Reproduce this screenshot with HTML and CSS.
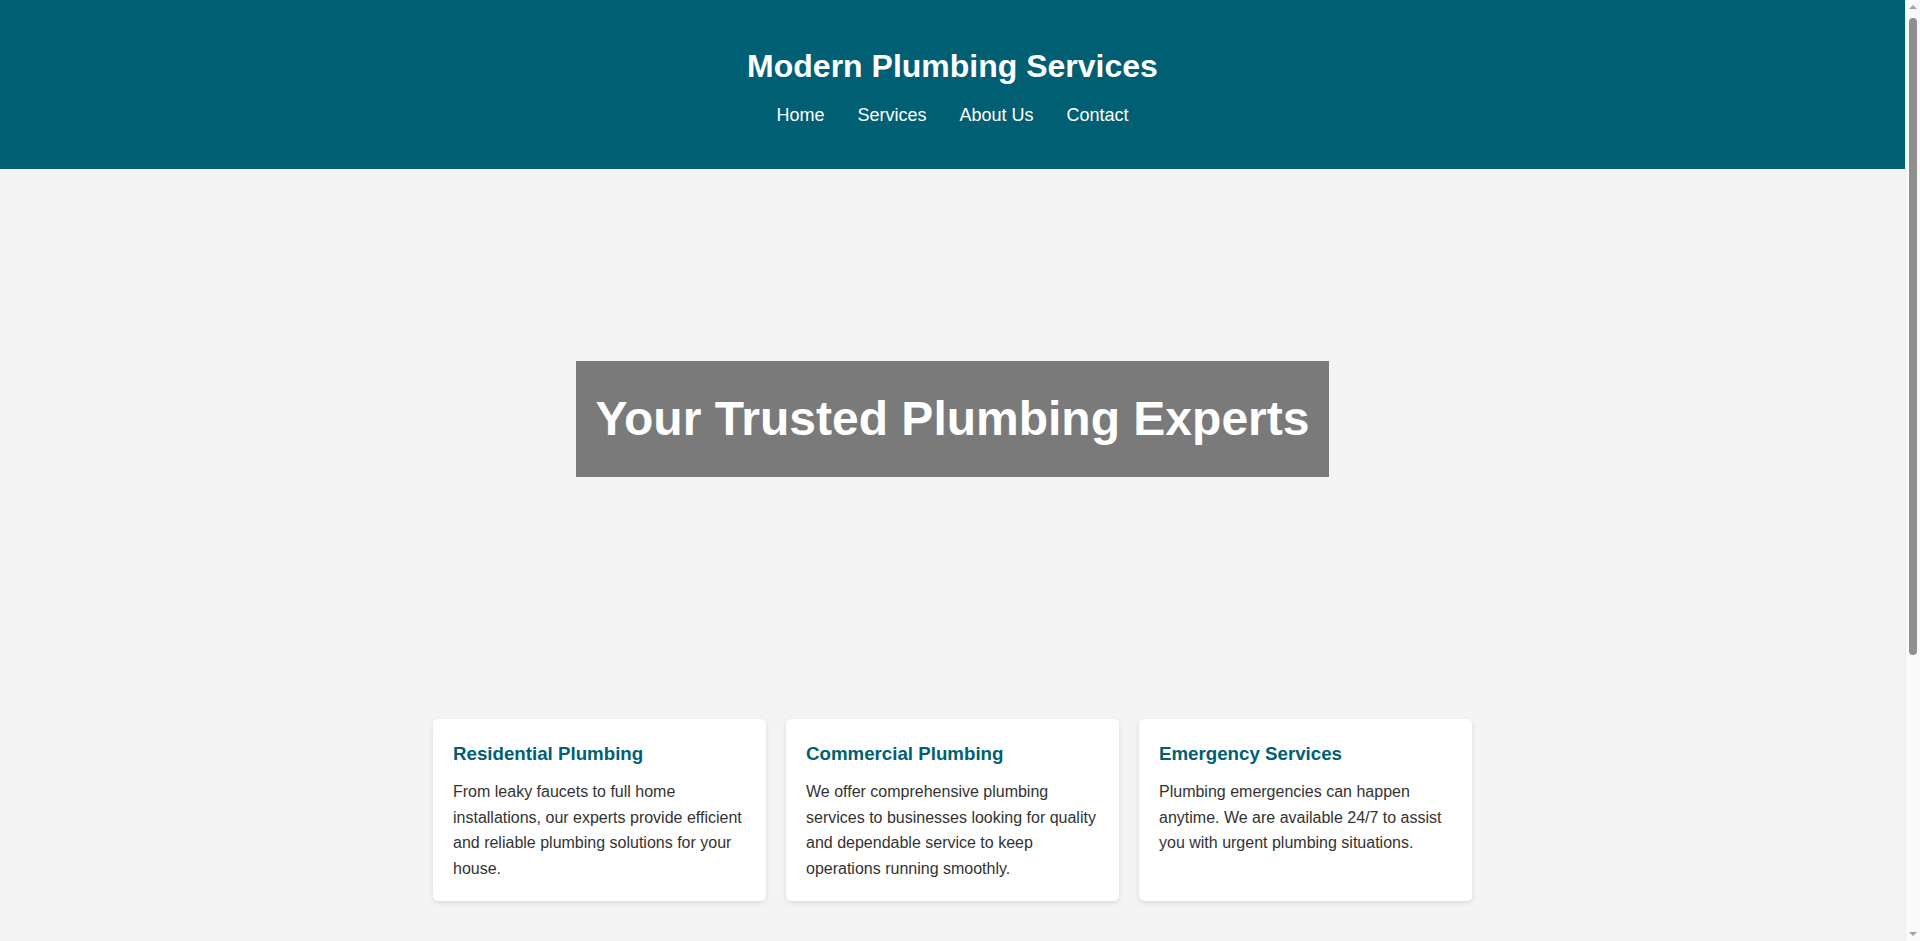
FILE: index.html
```html
<!DOCTYPE html>
<html lang="en">
<head>
<meta charset="UTF-8">
<title>Modern Plumbing Services</title>
<link rel="stylesheet" href="styles.css">
</head>
<body>
<div class="page">
  <header class="site-header">
    <h1 class="site-title">Modern Plumbing Services</h1>
    <nav class="main-nav">
      <ul class="nav-list">
        <li><a href="#home">Home</a></li>
        <li><a href="#services">Services</a></li>
        <li><a href="#about">About Us</a></li>
        <li><a href="#contact">Contact</a></li>
      </ul>
    </nav>
  </header>

  <section class="hero" id="home">
    <h2 class="hero-title">Your Trusted Plumbing Experts</h2>
  </section>

  <section class="services" id="services">
    <div class="service-grid">
      <div class="service-card">
        <h3>Residential Plumbing</h3>
        <p>From leaky faucets to full home installations, our experts provide efficient and reliable plumbing solutions for your house.</p>
      </div>
      <div class="service-card">
        <h3>Commercial Plumbing</h3>
        <p>We offer comprehensive plumbing services to businesses looking for quality and dependable service to keep operations running smoothly.</p>
      </div>
      <div class="service-card">
        <h3>Emergency Services</h3>
        <p>Plumbing emergencies can happen anytime. We are available 24/7 to assist you with urgent plumbing situations.</p>
      </div>
    </div>
  </section>

  <section class="about" id="about">
    <h2 class="section-title">About Us</h2>
    <p>Modern Plumbing Services has been serving the community with honest, high-quality plumbing work for years. Our licensed technicians take pride in doing every job right the first time.</p>
    <p>We believe in transparent pricing, punctual service and lasting results.</p>
  </section>

  <footer class="site-footer" id="contact">
    <p>&copy; 2024 Modern Plumbing Services. All rights reserved.</p>
  </footer>
</div>

<div class="scrollbar" aria-hidden="true">
  <span class="scroll-arrow up"></span>
  <span class="scroll-thumb"></span>
  <span class="scroll-arrow down"></span>
</div>
</body>
</html>
```

FILE: styles.css
```css
* {
  box-sizing: border-box;
}

html,
body {
  overflow-x: hidden;
}

body {
  margin: 0;
  font-family: "Liberation Sans", Arial, sans-serif;
  line-height: 1.6;
  background: #f4f4f4;
  color: #333;
}

.page {
  margin-right: 15px;
}

.site-header {
  background: #005f73;
  color: #fff;
  text-align: center;
  padding: 20px 0 20px;
}

.site-title {
  font-size: 32px;
  margin: 21px 0 9px;
}

.nav-list {
  list-style: none;
  margin: 0 0 19px;
  padding: 0;
  display: flex;
  justify-content: center;
  gap: 33px;
  font-size: 18px;
  line-height: 28.8px;
}

.nav-list a {
  color: #fff;
  text-decoration: none;
}

.hero {
  height: 500px;
  display: flex;
  align-items: center;
  justify-content: center;
}

.hero-title {
  margin: 0;
  font-size: 48px;
  color: #fff;
  background: rgba(0, 0, 0, 0.5);
  padding: 20px;
}

.services {
  padding: 50px 20px;
}

.service-grid {
  display: grid;
  grid-template-columns: repeat(3, 333px);
  gap: 20px;
  justify-content: center;
}

.service-card {
  background: #fff;
  border-radius: 5px;
  padding: 20px;
  box-shadow: 0 2px 5px rgba(0, 0, 0, 0.1);
}

.service-card h3 {
  margin: 0 0 10px;
  font-size: 18.72px;
  color: #005f73;
}

.service-card p {
  margin: 0;
  font-size: 16px;
}

.about {
  padding: 40px 20px 60px;
  text-align: center;
}

.section-title {
  margin: 0 0 16px;
  font-size: 32px;
  color: #005f73;
}

.about p {
  max-width: 800px;
  margin: 0 auto 16px;
}

.site-footer {
  background: #005f73;
  color: #fff;
  text-align: center;
  padding: 20px;
}

.site-footer p {
  margin: 0;
}

/* imitation of the browser's scrollbar seen in the reference */
.scrollbar {
  position: fixed;
  top: 0;
  right: 0;
  width: 15px;
  height: 100vh;
  background: #fafafa;
  border-left: 1px solid #ececec;
  display: flex;
  flex-direction: column;
  align-items: center;
}

.scroll-arrow {
  width: 0;
  height: 0;
  border-left: 4px solid transparent;
  border-right: 4px solid transparent;
}

.scroll-arrow.up {
  margin-top: 5px;
  border-bottom: 4px solid #a3a3a3;
}

.scroll-arrow.down {
  margin-top: auto;
  margin-bottom: 5px;
  border-top: 4px solid #a3a3a3;
}

.scroll-thumb {
  width: 8px;
  height: 637px;
  margin-top: 9px;
  background: #8f8f8f;
  border-radius: 4px;
}
```
